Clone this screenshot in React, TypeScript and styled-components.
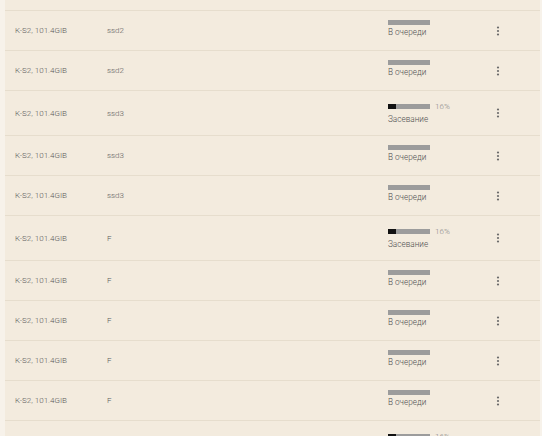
import styled, { createGlobalStyle } from "styled-components";

const GlobalStyle = createGlobalStyle`
  html, body {
    margin: 0;
    padding: 0;
    background: #f7f2ea;
    overflow: hidden;
  }
  body {
    font-family: Roboto, "Noto Sans", sans-serif;
  }
`;

const Page = styled.div`
  width: 542px;
  height: 436px;
  overflow: hidden;
  box-sizing: border-box;
  padding: 0 2px 0 5px;
`;

const Table = styled.div`
  background: #f3ebde;
  padding-top: 10px;
  min-height: 100%;
`;

const Row = styled.div<{ $tall: boolean }>`
  display: grid;
  grid-template-columns: 92px 1fr 109px 43px;
  align-items: center;
  height: ${(p) => (p.$tall ? 45 : 40)}px;
  box-sizing: border-box;
  border-top: 1px solid #e6ddcd;
  padding-left: 10px;
  color: #5a5a5a;
  font-size: 8px;
  font-weight: 300;
`;

const Cell = styled.div`
  white-space: nowrap;
`;

const Status = styled.div<{ $tall: boolean }>`
  display: flex;
  flex-direction: column;
  gap: ${(p) => (p.$tall ? 3 : 2)}px;
  margin-top: ${(p) => (p.$tall ? -1 : -5)}px;
`;

const BarLine = styled.div`
  display: flex;
  align-items: center;
  gap: 5px;
  height: 10px;
`;

const Bar = styled.div`
  width: 42px;
  height: 5px;
  background: #9c9c9c;
`;

const Fill = styled.div`
  height: 100%;
  background: #111;
`;

const Percent = styled.span`
  color: #8a8a8a;
  font-size: 8px;
`;

const Label = styled.div`
  line-height: 10px;
  font-size: 8.2px;
  color: #505050;
`;

const Menu = styled.div`
  display: flex;
  margin-left: -1px;
`;

type Item = { name: string; disk: string; seeding?: number };

const items: Item[] = [
  { name: "K-S2, 101.4GIB", disk: "ssd2" },
  { name: "K-S2, 101.4GIB", disk: "ssd2" },
  { name: "K-S2, 101.4GIB", disk: "ssd3", seeding: 16 },
  { name: "K-S2, 101.4GIB", disk: "ssd3" },
  { name: "K-S2, 101.4GIB", disk: "ssd3" },
  { name: "K-S2, 101.4GIB", disk: "F", seeding: 16 },
  { name: "K-S2, 101.4GIB", disk: "F" },
  { name: "K-S2, 101.4GIB", disk: "F" },
  { name: "K-S2, 101.4GIB", disk: "F" },
  { name: "K-S2, 101.4GIB", disk: "F" },
  { name: "K-S2, 101.4GIB", disk: "F", seeding: 16 },
];

function Dots() {
  return (
    <svg width="4" height="10" viewBox="0 0 4 10">
      <circle cx="2" cy="1.5" r="1.1" fill="#6b6b6b" />
      <circle cx="2" cy="5" r="1.1" fill="#6b6b6b" />
      <circle cx="2" cy="8.5" r="1.1" fill="#6b6b6b" />
    </svg>
  );
}

export default function App() {
  return (
    <Page>
      <GlobalStyle />
      <Table>
        {items.map((it, i) => {
          const tall = it.seeding !== undefined;
          return (
            <Row key={i} $tall={tall}>
              <Cell>{it.name}</Cell>
              <Cell>{it.disk}</Cell>
              <Status $tall={tall}>
                {tall ? (
                  <BarLine>
                    <Bar>
                      <Fill style={{ width: `${it.seeding! + 3}%` }} />
                    </Bar>
                    <Percent>{it.seeding}%</Percent>
                  </BarLine>
                ) : (
                  <Bar />
                )}
                <Label>{tall ? "Засевание" : "В очереди"}</Label>
              </Status>
              <Menu>
                <Dots />
              </Menu>
            </Row>
          );
        })}
      </Table>
    </Page>
  );
}
